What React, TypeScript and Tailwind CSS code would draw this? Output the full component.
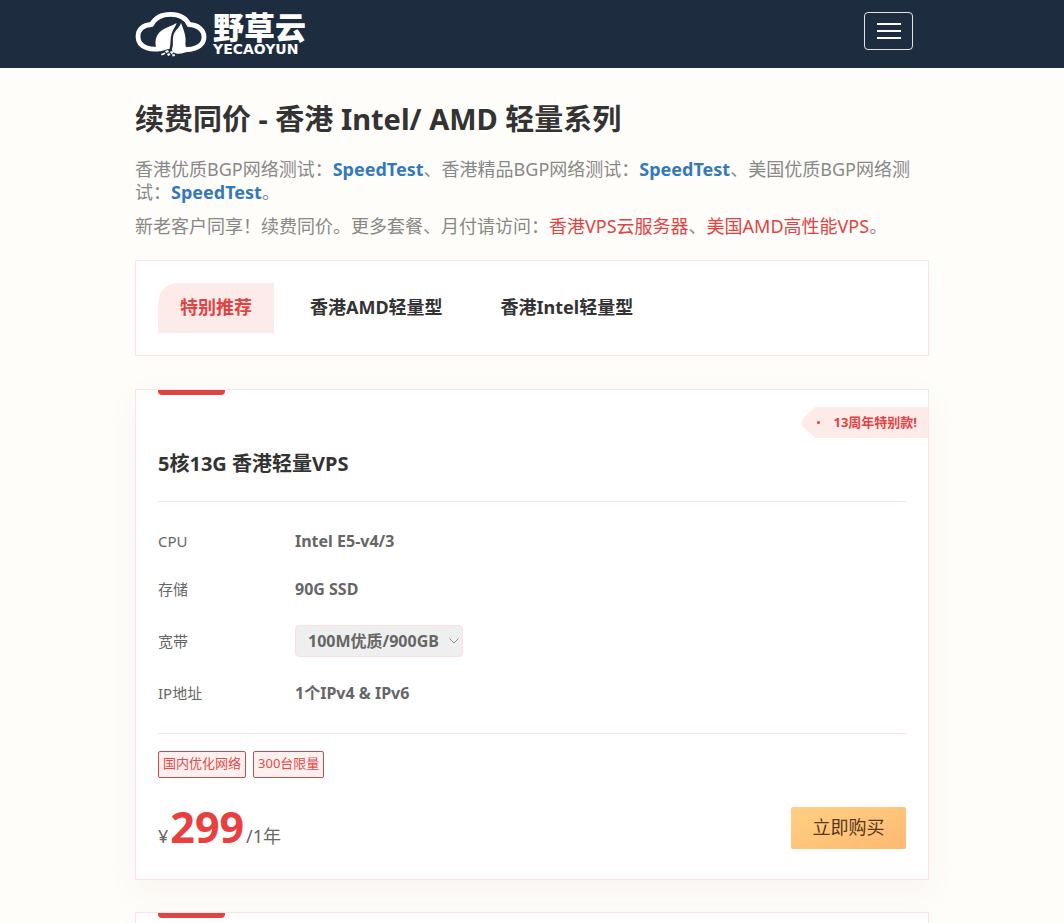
import { useState, type ReactNode } from "react";

const tabs = ["特别推荐", "香港AMD轻量型", "香港Intel轻量型"];

const tags = ["国内优化网络", "300台限量"];

const Logo = () => (
  <a href="#" className="flex items-center gap-1.5 text-white">
    <svg viewBox="0 0 72 46" className="h-[46px] w-[72px]" fill="none">
      {/* Cloud outline */}
      <path
        d="M23 38C19 38.5 15 38 12 37C6 35 3 31 3 25.500C3 18.500 8 14 16.500 13.500C20 7 27 3.300 35.500 3.300C44 3.300 51 7 54 13.500C63 14 69 19 69 26C69 33 63 38 53 38.500"
        stroke="currentColor"
        strokeWidth="4.8"
        strokeLinecap="round"
      />
      {/* Left leaf */}
      <path
        d="M41.500 12C41 15 38 18 36.500 23C35 28 36 33 34.500 38C31 38 28 41 23 40C20 36 19.500 29 22.500 24C27 16.500 36 16 41.500 12Z"
        fill="currentColor"
      />
      {/* Right leaf */}
      <path
        d="M46 12C48 17 50 22 50.500 27C51 32 49 36 53 36.500L55 40.500C50 41 46 43.500 41 42.500C38 41.500 36.500 40 37 37.500C39 34 37 29 38.500 24C40 19 44.500 17 46 12Z"
        fill="currentColor"
      />
      {/* Roots */}
      <path
        d="M30 40l3-1 1 2-3 1zM35 40.500l2.500-.5 1 2-2.500 1zM26 43l3.500-1.500 1 1.500-4 1.500zM32 43l2.500-1 1 2-2.500 1zM37 43.500l2.500-.5.5 2-2.500.5z"
        fill="currentColor"
      />
    </svg>
    <span className="flex flex-col">
      <span className="text-[31px] leading-[30px] font-black">野草云</span>
      <span className="font-['DejaVu_Sans',sans-serif] text-[14px] leading-[14px] font-bold">
        YECAOYUN
      </span>
    </span>
  </a>
);

const SpeedTest = () => (
  <a href="#" className="font-bold text-[#337ab7]">
    SpeedTest
  </a>
);

const Card = ({ children, className = "" }: { children?: ReactNode; className?: string }) => (
  <article
    className={`relative border border-[#fce4e3] bg-white px-[22px] shadow-[0_10px_30px_rgba(80,70,50,0.05)] ${className}`}
  >
    <div className="h-[5px] w-[67px] rounded-b-sm bg-[#e04343]" />
    {children}
  </article>
);

const Spec = ({ label, children }: { label: string; children: ReactNode }) => (
  <div className="flex items-center">
    <dt className="w-[137px] text-[15px]">{label}</dt>
    <dd className="text-[16px] font-bold">{children}</dd>
  </div>
);

export default function App() {
  const [active, setActive] = useState(0);

  return (
    <div className="flex min-h-screen flex-col bg-[#fffdf9] font-['Noto_Sans','Noto_Sans_CJK_SC',sans-serif] text-[#333]">
      <header className="bg-[#1e2c40]">
        <div className="mx-auto flex h-[68px] w-full max-w-[794px] items-center justify-between pr-4">
          <Logo />
          <button
            type="button"
            aria-label="菜单"
            className="mb-1.5 flex h-[38px] w-[49px] flex-col items-center justify-center gap-[5px] rounded border border-[#dfe3e8]"
          >
            <span className="h-0.5 w-6 bg-white" />
            <span className="h-0.5 w-6 bg-white" />
            <span className="h-0.5 w-6 bg-white" />
          </button>
        </div>
      </header>

      <main className="mx-auto flex w-full max-w-[794px] grow flex-col pt-[31px]">
        <h1 className="text-[29px] leading-[40px] font-bold">续费同价 - 香港 Intel/ AMD 轻量系列</h1>
        <div className="mt-[19px] text-[18px] leading-[23px] text-[#888]">
          <p>
            香港优质BGP网络测试：
            <SpeedTest />
            、香港精品BGP网络测试：
            <SpeedTest />
            、美国优质BGP网络测试：
            <SpeedTest />。
          </p>
          <p className="mt-[11px]">
            新老客户同享！续费同价。更多套餐、月付请访问：
            <a href="#" className="text-[#e04343]">香港VPS云服务器</a>、
            <a href="#" className="text-[#e04343]">美国AMD高性能VPS</a>。
          </p>
        </div>

        <nav className="mt-[22px] flex gap-[14px] border border-[#fce4e3] bg-white p-[22px]">
          {tabs.map((tab, index) => (
            <button
              key={tab}
              type="button"
              onClick={() => setActive(index)}
              className={`h-[50px] px-[22px] pb-0.5 text-[18px] font-bold ${
                index === active ? "rounded-tl-[20px] bg-[#fdebea] text-[#e04343]" : ""
              }`}
            >
              {tab}
            </button>
          ))}
        </nav>

        <Card className="mt-[33px] pb-[30px]">
          <div className="absolute top-[17px] right-0 flex h-[31px] items-center bg-[#fdebea] pr-[11px] pl-4 text-[13px] font-bold text-[#e04343] [clip-path:polygon(0_50%,2px_35%,14px_0,100%_0,100%_100%,14px_100%,2px_65%)]">
            <span className="mr-[13px] size-[3px] rounded-full bg-[#e04343]" />
            13周年特别款!
          </div>
          <h2 className="mt-[54px] text-[20px] leading-[30px] font-bold">5核13G 香港轻量VPS</h2>
          <dl className="mt-[22px] flex flex-col gap-6 border-y border-[#fce4e3] pt-[27px] pb-7 text-[#666]">
            <Spec label="CPU">Intel E5-v4/3</Spec>
            <Spec label="存储">90G SSD</Spec>
            <div className="flex items-center">
              <dt className="w-[137px] text-[15px]">
                <label htmlFor="bandwidth">宽带</label>
              </dt>
              <dd className="relative">
                <select
                  id="bandwidth"
                  className="h-8 w-[168px] appearance-none rounded border border-[#fbe0df] bg-[#efefef] pl-3 text-[16px] font-bold"
                >
                  <option>100M优质/900GB</option>
                </select>
                <svg
                  viewBox="0 0 10 6"
                  className="pointer-events-none absolute top-[13px] right-1 h-1.5 w-2.5"
                  fill="none"
                  stroke="#888"
                >
                  <path d="M0.5 0.5L5 5L9.5 0.5" />
                </svg>
              </dd>
            </div>
            <Spec label="IP地址">1个IPv4 &amp; IPv6</Spec>
          </dl>
          <div className="mt-[17px] flex gap-[7px]">
            {tags.map((tag) => (
              <span
                key={tag}
                className="flex h-[27px] items-center rounded-xs border border-[#cf4a4a] bg-[#fff0ef] px-1 pb-0.5 text-[13px] text-[#dd4b4a]"
              >
                {tag}
              </span>
            ))}
          </div>
          <div className="mt-[29px] flex h-[42px] items-center justify-between">
            <p className="flex items-baseline gap-0.5 text-[#666]">
              <span className="text-[18px]">¥</span>
              <strong className="text-[43px] leading-[42px] font-bold text-[#e93f3f]">299</strong>
              <span className="text-[18px]">/1年</span>
            </p>
            <button
              type="button"
              className="h-[42px] w-[115px] rounded-xs bg-linear-to-br from-[#ffd083] to-[#ffb872] pb-0.5 text-[18px] text-[#54371c]"
            >
              立即购买
            </button>
          </div>
        </Card>

        <Card className="mt-8 grow border-b-0" />
      </main>
    </div>
  );
}
